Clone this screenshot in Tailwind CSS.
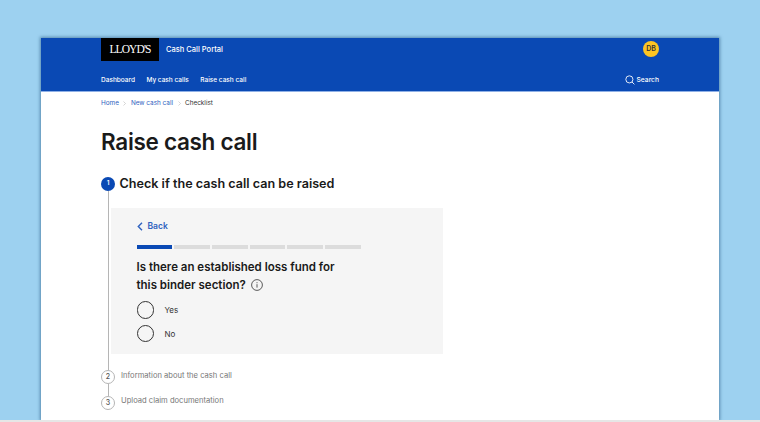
<!DOCTYPE html>
<html lang="en">
<head>
  <meta charset="UTF-8">
  <title>Raise cash call - Cash Call Portal</title>
  <script src="https://cdn.jsdelivr.net/npm/@tailwindcss/browser@4"></script>
</head>
<body class="bg-[#9dd1f0] h-[422px] overflow-hidden font-['Inter',sans-serif] text-[#1a1a1a]">
  <div class="pt-[38px] pl-[41px] h-[420px] overflow-hidden">
    <div class="w-[678px] h-[382px] bg-white shadow-[0_0_3px_1px_rgba(30,80,120,0.55)] flex flex-col">
      <header class="bg-[#0a49b4] h-[53px] pl-[60px] pr-[60px] flex flex-col shrink-0">
        <div class="flex items-start justify-between h-[34px]">
          <div class="flex items-center">
            <div class="w-[58px] h-[23px] bg-black text-white flex items-center justify-center font-['Liberation_Serif',serif] text-[11.5px] tracking-[-0.9px]">LLOYD'S</div>
            <span class="ml-[7px] text-white text-[7.5px] font-medium">Cash Call Portal</span>
          </div>
          <div class="w-4 h-4 mt-[3px] rounded-full bg-[#fdc522] flex items-center justify-center text-[7px] font-semibold text-[#333]">DB</div>
        </div>
        <nav class="flex items-center justify-between h-[17px]">
          <div class="flex gap-[11.5px] text-white text-[6.5px] font-medium">
            <a>Dashboard</a>
            <a>My cash calls</a>
            <a>Raise cash call</a>
          </div>
          <div class="flex items-center gap-[2px] text-white text-[6.7px] font-medium">
            <svg class="w-[10px] h-[10px]" viewBox="0 0 16 16" fill="none" stroke="currentColor" stroke-width="1.4"><circle cx="7" cy="7" r="5.7"/><path d="M11.2 11.2 15 15"/></svg>
            <span>Search</span>
          </div>
        </nav>
      </header>
      <div class="h-px bg-[#8fb0e6] shrink-0"></div>

      <main class="pl-[60px] flex-1">
        <div class="flex items-center h-[23px] text-[6.4px]">
          <a class="text-[#2f62c0]">Home</a>
          <svg class="w-[3px] h-[5px] mx-[4.5px]" viewBox="0 0 3 5" fill="none" stroke="#bbb" stroke-width="0.6"><path d="M.5.5 2.5 2.5.5 4.5"/></svg>
          <a class="text-[#2f62c0]">New cash call</a>
          <svg class="w-[3px] h-[5px] mx-[4.5px]" viewBox="0 0 3 5" fill="none" stroke="#bbb" stroke-width="0.6"><path d="M.5.5 2.5 2.5.5 4.5"/></svg>
          <span class="text-[#333]">Checklist</span>
        </div>

        <h1 class="mt-[13px] text-[22.5px] leading-[28px] font-semibold tracking-[-0.3px]">Raise cash call</h1>

        <div class="mt-[21px] flex items-center h-[14px]">
          <div class="w-[14px] h-[14px] rounded-full bg-[#0a49b4] text-white text-[6.5px] font-semibold flex items-center justify-center">1</div>
          <h2 class="ml-[4.5px] pt-px text-[12.6px] font-semibold">Check if the cash call can be raised</h2>
        </div>

        <div class="ml-[6.5px] border-l border-[#b5b5b5] pt-[16.5px] pb-[16.5px] pl-[2px]">
          <section class="w-[332.5px] h-[146px] bg-[#f5f5f5] pl-[26px] pt-[12.5px]">
            <a class="flex items-center gap-[5px] text-[#2f62c0] text-[8.5px] font-semibold h-[12px]">
              <svg class="w-[6px] h-[9px]" viewBox="0 0 6 9" fill="none" stroke="currentColor" stroke-width="1.4"><path d="M5 .8 1.3 4.5 5 8.2"/></svg>
              Back
            </a>
            <div class="mt-[13px] flex gap-[2px] h-[4px]">
              <div class="w-[35.7px] bg-[#0a49b4]"></div>
              <div class="w-[35.7px] bg-[#dcdcdc]"></div>
              <div class="w-[35.7px] bg-[#dcdcdc]"></div>
              <div class="w-[35.7px] bg-[#dcdcdc]"></div>
              <div class="w-[35.7px] bg-[#dcdcdc]"></div>
              <div class="w-[35.7px] bg-[#dcdcdc]"></div>
            </div>
            <p class="mt-[9px] w-[205px] text-[11.5px] leading-[18px] font-semibold">
              Is there an established loss fund for this binder section?
              <svg class="inline-block w-[12px] h-[12px] ml-[2px] align-[-2px]" viewBox="0 0 12 12" fill="none" stroke="#333" stroke-width="0.8"><circle cx="6" cy="6" r="5.4"/><path d="M6 5.2v3.4M6 3.2v1"/></svg>
            </p>
            <div class="mt-[7px] flex flex-col gap-[5.5px]">
              <label class="flex items-center h-[18px]">
                <span class="w-[17.5px] h-[17.5px] rounded-full border border-[#333]"></span>
                <span class="ml-[10.5px] text-[8px] text-[#333]">Yes</span>
              </label>
              <label class="flex items-center h-[18px]">
                <span class="w-[17.5px] h-[17.5px] rounded-full border border-[#333]"></span>
                <span class="ml-[10.5px] text-[8px] text-[#333]">No</span>
              </label>
            </div>
          </section>
        </div>

        <div class="flex items-start h-[14px]">
          <div class="w-[14px] h-[14px] pt-px rounded-full border border-[#b5b5b5] text-[#555] text-[7px] font-medium flex items-center justify-center">2</div>
          <span class="ml-[6px] text-[7.6px] leading-[11px] text-[#777]">Information about the cash call</span>
        </div>
        <div class="ml-[6.5px] h-[12px] border-l border-[#b5b5b5]"></div>
        <div class="flex items-start h-[14px]">
          <div class="w-[14px] h-[14px] pt-px rounded-full border border-[#b5b5b5] text-[#555] text-[7px] font-medium flex items-center justify-center">3</div>
          <span class="ml-[6px] -mt-[1.5px] text-[7.6px] leading-[11px] text-[#777]">Upload claim documentation</span>
        </div>
      </main>
    </div>
  </div>
  <div class="h-[2px] bg-[#e6e6e6]"></div>
</body>
</html>
